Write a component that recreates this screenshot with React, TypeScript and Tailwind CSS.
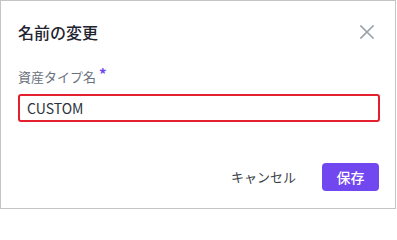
import React from "react";

export default function App() {
  const font = { fontFamily: '"Noto Sans CJK JP", "Noto Sans", sans-serif' };
  return (
    <div
      className="w-[396px] h-[209px] border border-[#c4c4c4] bg-white flex flex-col pl-[17px] font-['Noto_Sans_CJK_JP',sans-serif]"
      style={font}
    >
      <div className="mt-[19px] flex items-center justify-between h-[24px] w-[359px]">
        <h2 className="text-[16px] leading-[24px] font-medium text-[#1f2430]">名前の変更</h2>
        <button className="w-[20px] h-[20px] flex items-center justify-center text-[#9aa0a8]">
          <svg width="14" height="14" viewBox="0 0 14 14" fill="none" stroke="currentColor" strokeWidth="1.6" strokeLinecap="square">
            <path d="M1 1 L13 13 M13 1 L1 13" />
          </svg>
        </button>
      </div>
      <div className="mt-[23px] flex items-start h-[20px]">
        <span className="text-[13px] leading-[20px] text-[#6b7280]">資産タイプ名</span>
        <span className="ml-[3px] text-[15px] leading-[14px] text-[#7147f0] font-bold">*</span>
      </div>
      <div className="mt-[7px] w-[362px] h-[28px] border-2 border-[#e3212e] rounded-[3px] flex items-center px-[7px]">
        <span className="text-[14px] leading-[20px] text-[#2d3340]">CUSTOM</span>
      </div>
      <div className="mt-[41px] w-[361px] flex items-center justify-end">
        <button className="text-[13px] leading-[20px] text-[#3a3f4a] mr-[26px]">キャンセル</button>
        <button className="w-[57px] h-[28px] rounded-[4px] bg-[#7147f0] text-white text-[14px] font-medium leading-[20px]">保存</button>
      </div>
    </div>
  );
}
